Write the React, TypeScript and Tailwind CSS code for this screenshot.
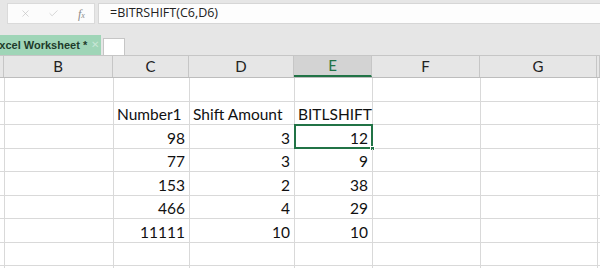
import { X, Check } from "lucide-react"

const cols = [
  { id: "A", w: "w-[4px]" },
  { id: "B", w: "w-[109px]" },
  { id: "C", w: "w-[76px]" },
  { id: "D", w: "w-[105px]" },
  { id: "E", w: "w-[78px]" },
  { id: "F", w: "w-[108px]" },
  { id: "G", w: "w-[117px]" },
  { id: "H", w: "w-[3px]" },
]

type Row = { c?: string; d?: string; e?: string; text?: boolean; h: string }

const rows: Array<Row> = [
  { h: "h-[24px]" },
  { c: "Number1", d: "Shift Amount", e: "BITLSHIFT", text: true, h: "h-[23px]" },
  { c: "98", d: "3", e: "12", h: "h-[24px]" },
  { c: "77", d: "3", e: "9", h: "h-[23px]" },
  { c: "153", d: "2", e: "38", h: "h-[24px]" },
  { c: "466", d: "4", e: "29", h: "h-[23px]" },
  { c: "11111", d: "10", e: "10", h: "h-[24px]" },
  { h: "h-[23px]" },
  { h: "h-[24px]" },
]

const Cell = ({
  w,
  value,
  text,
  selected,
}: {
  w: string
  value?: string
  text?: boolean
  selected?: boolean
}) => (
  <div
    className={`${w} shrink-0 h-full border-r border-[#d9d9d9] flex items-end pb-[1px] overflow-visible whitespace-nowrap relative ${
      text ? "justify-start pl-[3px]" : "justify-end pr-[4px]"
    }`}
  >
    {value}
    {selected && (
      <div className="absolute -left-[1px] -top-[1px] -right-[1px] -bottom-[1px] border-2 border-[#217346]">
        <div className="absolute -right-[4px] -bottom-[4px] w-[5px] h-[5px] bg-[#217346] border border-white" />
      </div>
    )}
  </div>
)

export default function App() {
  return (
    <div className="w-[600px] h-[268px] overflow-hidden bg-white font-['Lato','Open_Sans',sans-serif] text-[#111]">
      {/* formula bar */}
      <div className="h-[55px] bg-[#e6e6e6] flex flex-col">
        <div className="flex gap-[3px] pt-[3px] h-[25px]">
          <div className="ml-[7px] w-[88px] h-[21px] bg-[#fcfcfc] border border-[#dadada] flex items-center text-[#c0c0c0]">
            <X className="ml-[12px] w-[11px] h-[11px]" strokeWidth={1.4} />
            <Check className="ml-[17px] w-[11px] h-[11px]" strokeWidth={1.4} />
            <span className="ml-[19px] text-[12px] italic font-['Liberation_Serif',serif] text-[#8a8a8a]">
              f<span className="text-[8px]">x</span>
            </span>
          </div>
          <div className="flex-1 h-[21px] bg-[#fdfdfd] border border-[#d6d6d6] border-r-0 flex items-center pl-[11px] text-[12.5px] font-['Open_Sans',sans-serif] text-[#222]">
            =BITRSHIFT(C6,D6)
          </div>
        </div>
        <div className="flex items-end mt-auto">
          <div className="w-[101px] h-[20px] bg-[#9fd5b7] flex items-center overflow-hidden">
            <span className="-ml-[8px] shrink-0 whitespace-nowrap text-[11px] font-bold font-['Liberation_Sans',sans-serif] text-[#1d3b2a]">
              Excel Worksheet *
            </span>
            <span className="ml-[4px] shrink-0 text-[10px] leading-none text-[#c9e6d6] font-['Liberation_Sans',sans-serif]">
              ✕
            </span>
          </div>
          <div className="ml-[2px] w-[22px] h-[17px] bg-white border border-[#c6c6c6] border-b-0" />
        </div>
      </div>

      {/* column header */}
      <div className="flex h-[23px] bg-[#e6e6e6] border-t border-[#c6c6c6] border-b border-b-[#bdbdbd] text-[15px] text-[#222]">
        {cols.map(({ id, w }) => (
          <div
            key={id}
            className={`${w} shrink-0 h-full border-r border-[#c6c6c6] flex items-center justify-center ${
              id === "E"
                ? "bg-[#d3d3d3] text-[#217346] border-b-2 border-b-[#217346]"
                : ""
            }`}
          >
            {id === "A" || id === "H" ? "" : id}
          </div>
        ))}
      </div>

      {/* grid */}
      <div className="text-[15.5px] leading-[18px]">
        {rows.map((r, i) => (
          <div key={i} className={`flex ${r.h} border-b border-[#d9d9d9]`}>
            <Cell w="w-[4px]" />
            <Cell w="w-[109px]" />
            <Cell w="w-[76px]" value={r.c} text={r.text} />
            <Cell w="w-[105px]" value={r.d} text={r.text} />
            <Cell w="w-[78px]" value={r.e} text={r.text} selected={i === 2} />
            <Cell w="w-[108px]" />
            <Cell w="w-[117px]" />
            <Cell w="w-[3px]" />
          </div>
        ))}
      </div>
    </div>
  )
}
